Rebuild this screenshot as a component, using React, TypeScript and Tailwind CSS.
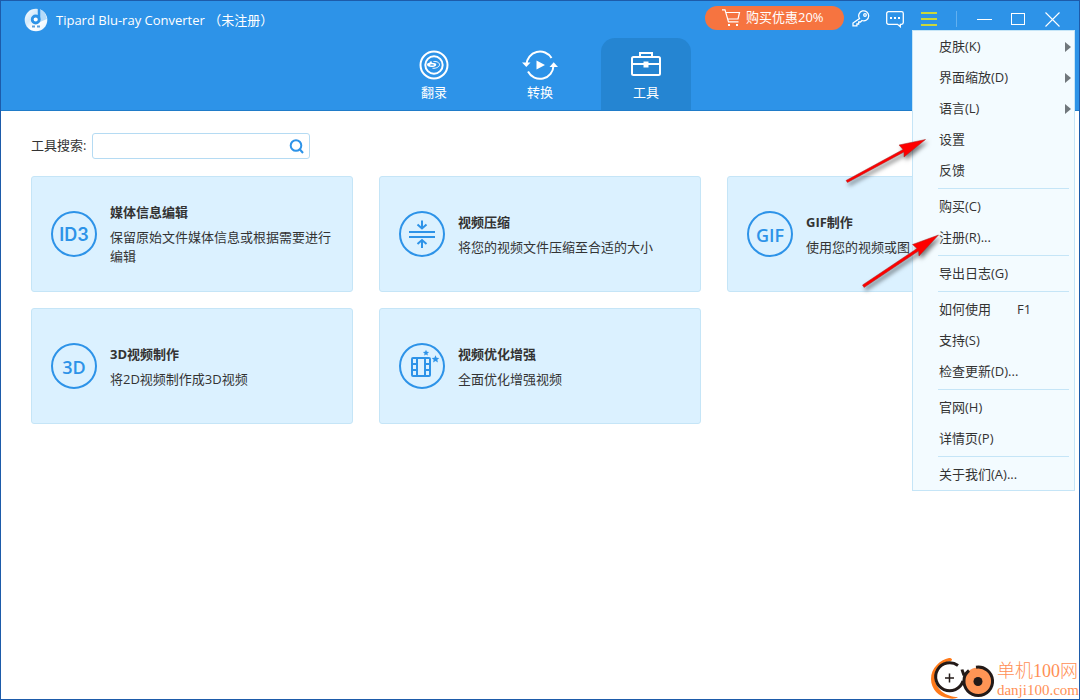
import type { ReactNode } from 'react';

const SANS = "font-['Open_Sans','Noto_Sans_CJK_SC',sans-serif]";

interface Tool {
  title: string;
  desc: string;
  icon: ReactNode;
}

interface MenuItem {
  label: string;
  shortcut?: string;
  submenu?: boolean;
}

// every inner array is a block, blocks are split by a separator
const menuGroups: MenuItem[][] = [
  [
    { label: '皮肤(K)', submenu: true },
    { label: '界面缩放(D)', submenu: true },
    { label: '语言(L)', submenu: true },
    { label: '设置' },
    { label: '反馈' },
  ],
  [{ label: '购买(C)' }, { label: '注册(R)...' }],
  [{ label: '导出日志(G)' }],
  [{ label: '如何使用', shortcut: 'F1' }, { label: '支持(S)' }, { label: '检查更新(D)...' }],
  [{ label: '官网(H)' }, { label: '详情页(P)' }],
  [{ label: '关于我们(A)...' }],
];

const CompressIcon = () => (
  <svg width="26" height="28" viewBox="0 0 26 28" fill="none" stroke="currentColor" strokeWidth="2">
    <path d="M0 12h26M0 17h26M13 .5v8M8.500 4.500l4.500 4 4.500-4M13 28v-8M8.500 24l4.500-4 4.500 4" />
  </svg>
);

const EnhanceIcon = () => (
  <svg width="46" height="46" viewBox="0 0 46 46" className="shrink-0" fill="none" stroke="currentColor" strokeWidth="2">
    <rect x="13" y="15" width="18" height="18" rx="1" />
    <path d="M18 15v18M26 15v18M13 21h5M13 27h5M26 21h5M26 27h5" />
    <path
      fill="currentColor"
      stroke="none"
      d="M27 6.800l.9 2 2.200.2-1.700 1.400.5 2.200-1.900-1.200-1.900 1.200.5-2.200L23.900 9l2.200-.2zM36.500 12.300l1.100 2.500 2.700.2-2 1.800.6 2.700-2.400-1.400-2.400 1.400.6-2.700-2-1.800 2.700-.2z"
    />
  </svg>
);

const tools: Tool[] = [
  {
    title: '媒体信息编辑',
    desc: '保留原始文件媒体信息或根据需要进行编辑',
    icon: <span className="font-['Inter',sans-serif] text-[18px] font-semibold">ID3</span>,
  },
  { title: '视频压缩', desc: '将您的视频文件压缩至合适的大小', icon: <CompressIcon /> },
  { title: 'GIF制作', desc: '使用您的视频或图', icon: <span className="pt-[2px] text-[18px] font-semibold">GIF</span> },
  { title: '3D视频制作', desc: '将2D视频制作成3D视频', icon: <span className="pt-[2px] text-[18px] font-semibold">3D</span> },
  { title: '视频优化增强', desc: '全面优化增强视频', icon: <EnhanceIcon /> },
];

function AppLogo() {
  return (
    <svg width="24" height="24" viewBox="0 0 24 24">
      <defs>
        <linearGradient id="disc" x1="0" y1="0" x2="1" y2="1">
          <stop offset="0" stopColor="#ffffff" />
          <stop offset="0.35" stopColor="#d3eafc" />
          <stop offset="0.6" stopColor="#ffffff" />
          <stop offset="1" stopColor="#e3f2fe" />
        </linearGradient>
      </defs>
      <circle cx="12" cy="12" r="11.300" fill="url(#disc)" />
      <path d="M16 1l5 4 2 6-7 3z" fill="#b4daf9" />
      <path d="M15 0v12" stroke="#2d93e8" strokeWidth="2.500" />
      <circle cx="11.700" cy="11.500" r="3.500" fill="#fff" stroke="#2d93e8" strokeWidth="2.800" />
      <path d="M8 18.500h3M13 18.500h3" stroke="#5a9edb" strokeWidth="2" />
    </svg>
  );
}

function RipIcon() {
  return (
    <svg width="30" height="30" viewBox="0 0 30 30" fill="none" stroke="currentColor" strokeWidth="2">
      <circle cx="15" cy="15" r="13.500" />
      <circle cx="15" cy="15" r="8.700" />
      <path strokeWidth="1" d="M14.500 11.500c3.500-.3 6 1.200 6 3.200s-3 3.800-7 3.600" />
      <path fill="currentColor" stroke="none" d="M8 14.500c0-1 1-1.600 2.500-1.800L11 11.500h2l-.3 1.300c3 0 4.600.7 4.600 1.900 0 1.400-2.300 2.300-5 2.300C9.500 17 8 16 8 14.500z" />
      <ellipse cx="13" cy="14.900" rx="2" ry=".7" fill="#2d93e8" stroke="none" />
    </svg>
  );
}

function ConvertIcon() {
  return (
    <svg width="36" height="30" viewBox="0 0 36 30" fill="none" stroke="currentColor" strokeWidth="2">
      <path d="M4.500 14.500A13.500 13.500 0 0 1 29.500 8M31.500 15.500A13.500 13.500 0 0 1 6 21.500" />
      <path fill="currentColor" stroke="none" d="M0 12.500h8.500L4.300 17zM27.500 17H36l-4.300-4.800zM14.500 10.500v9l8.500-4.500z" />
    </svg>
  );
}

function ToolboxIcon() {
  return (
    <svg width="30" height="30" viewBox="0 0 30 30" fill="none" stroke="currentColor" strokeWidth="2">
      <rect x="1" y="7" width="28" height="18" rx="1.500" />
      <path d="M9 7V3h12v4M1 14h28" />
      <path fill="currentColor" stroke="none" d="M12.500 11.500h5v6h-5z" />
    </svg>
  );
}

const tabs = [
  { label: '翻录', icon: <RipIcon />, active: false },
  { label: '转换', icon: <ConvertIcon />, active: false },
  { label: '工具', icon: <ToolboxIcon />, active: true },
];

function WindowButton({ label, children }: { label: string; children: ReactNode }) {
  return (
    <button aria-label={label} className="flex h-[26px] w-[34px] items-center justify-center">
      {children}
    </button>
  );
}

function TitleBar() {
  return (
    <div className="flex h-[37px] items-start justify-between pr-[10px] pl-[23px]">
      <div className="flex items-center gap-2 pt-[7px]">
        <AppLogo />
        <h1 className="leading-5">Tipard Blu-ray Converter （未注册）</h1>
      </div>
      <div className="flex items-start pt-[5px]">
        <button className="flex h-6 w-[139px] items-center gap-[5px] rounded-full bg-[#f67440] pl-4">
          <svg width="20" height="18" viewBox="0 0 20 18" fill="none" stroke="currentColor" strokeWidth="1.200">
            <path d="M1 .8h3l3.500 12h10M5 3.500h13.500L17 10H6.800" />
            <path fill="currentColor" stroke="none" d="M7 15h2v2H7zM15 15h2v2h-2z" />
          </svg>
          购买优惠20%
        </button>
        <WindowButton label="注册">
          <svg width="18" height="18" viewBox="0 0 18 18" fill="none" stroke="currentColor" strokeWidth="1.300">
            <path d="M7.500 8.500A5 5 0 1 1 10 10.500L8.500 12H6.700v2H4.900v1.800H1V13z" />
            <circle cx="13" cy="5" r="1.300" />
          </svg>
        </WindowButton>
        <WindowButton label="反馈">
          <svg width="18" height="18" viewBox="0 0 18 18" fill="none" stroke="currentColor" strokeWidth="1.300">
            <path d="M2.500 1.700h13a1.800 1.800 0 0 1 1.800 1.800v9a1.800 1.800 0 0 1-1.800 1.800h-1.200v2.400l-2.800-2.400h-9A1.800 1.800 0 0 1 .7 12.500v-9a1.800 1.800 0 0 1 1.800-1.800z" />
            <path fill="currentColor" stroke="none" d="M4 7h2v2H4zM8 7h2v2H8zM12 7h2v2h-2z" />
          </svg>
        </WindowButton>
        <WindowButton label="菜单">
          <svg width="16" height="14" viewBox="0 0 16 14" fill="none" stroke="#ffee00" strokeWidth="1.500">
            <path d="M0 1h16M0 7h16M0 13h16" />
          </svg>
        </WindowButton>
        <div className="flex h-[26px] w-[21px] items-center justify-center">
          <div className="h-4 w-px bg-[#62b0f0]" />
        </div>
        <WindowButton label="最小化">
          <span className="h-px w-[15px] bg-white" />
        </WindowButton>
        <WindowButton label="最大化">
          <span className="h-3 w-[14px] border border-white" />
        </WindowButton>
        <WindowButton label="关闭">
          <svg width="15" height="15" viewBox="0 0 15 15" stroke="currentColor" strokeWidth="1.100">
            <path d="M.5.5l14 14M14.500.5l-14 14" />
          </svg>
        </WindowButton>
      </div>
    </div>
  );
}

function ToolCard({ title, desc, icon }: Tool) {
  return (
    <button className="flex min-h-[116px] items-center gap-[13px] rounded-[3px] border border-[#c5e5f7] bg-[#dbf1ff] px-[19px] text-left">
      <span className="flex size-[46px] shrink-0 items-center justify-center rounded-full border-2 border-[#2d93e8] text-[#2d93e8]">
        {icon}
      </span>
      <span className="flex flex-col gap-[6px]">
        <span className="leading-5 font-bold">{title}</span>
        <span className="leading-[19px]">{desc}</span>
      </span>
    </button>
  );
}

function MainMenu() {
  return (
    <div className="absolute top-[29px] right-1 w-[163px] border border-[#c5e5f7] bg-[#f3fbff]">
      {menuGroups.map((group, i) => (
        <div key={group[0].label}>
          {i > 0 && (
            <div className="flex h-[5px] items-center pr-[5px] pl-[25px]">
              <div className="h-px flex-1 bg-[#c5e5f7]" />
            </div>
          )}
          {group.map(item => (
            <button key={item.label} className="flex h-[31px] w-full items-center pr-[3px] pl-[26px] text-left">
              {item.label}
              {item.shortcut && <span className="ml-[26px]">{item.shortcut}</span>}
              {item.submenu && (
                <svg width="6" height="10" viewBox="0 0 6 10" className="ml-auto text-[#70777c]">
                  <path d="M0 0l6 5-6 5z" fill="currentColor" />
                </svg>
              )}
            </button>
          ))}
        </div>
      ))}
    </div>
  );
}

// red pointers at 设置 and 注册
function Pointers() {
  return (
    <svg
      className="pointer-events-none absolute top-[129px] right-[129px] drop-shadow-[2px_3px_2px_rgba(0,0,0,0.5)]"
      width="110"
      height="170"
      viewBox="0 0 110 170"
      fill="#fe0000"
      stroke="#a02828"
      strokeWidth="0.500"
      strokeLinejoin="round"
    >
      <path d="M6 50.500L63 19.500 59 15 85.500 9.500 64 27 64 22 7.500 52.500z" />
      <path d="M22.500 155L77 118.500 72.500 114.500 98.500 105 79 126 78.500 121 24 157.500z" />
    </svg>
  );
}

function SiteMark() {
  return (
    <div className="absolute right-0 bottom-0 flex items-center text-[#ff8f55]">
      <svg width="66" height="42" viewBox="0 0 66 42" fill="none">
        <path d="M18 1C9 3 0 11 0 22c0 10 8 18 17 19 3 1 8 1 10-1-12 0-23-8-23-19C4 12 10 5 20 4c2-1 1-3-2-3z" fill="#ff7a1a" />
        <path d="M27 8.500A14 14 0 1 0 32 24" stroke="#231a18" strokeWidth="3" />
        <path d="M14 21h9M18.500 16.500v9" stroke="#231a18" strokeWidth="1.500" />
        <circle cx="47" cy="24.500" r="14" fill="#ff9555" />
        <path d="M31 12.500c.5 2 1.500 4 2 6M45 10.200a14.300 14.300 0 1 1-12 13C33 19 35 16 38 13.500" stroke="#231a18" strokeWidth="3" />
        <circle cx="47" cy="24.500" r="4.500" fill="#231a18" />
      </svg>
      <div className="flex flex-col pt-1 font-['Liberation_Serif','Noto_Sans_CJK_SC',serif]">
        <span className="text-[18px] leading-5 font-light">单机100网</span>
        <a href="#" className="text-[15px] leading-[18px]">danji100.com</a>
      </div>
    </div>
  );
}

export default function App() {
  return (
    <div className={`relative min-h-screen overflow-hidden border border-[#1d5baa] bg-white text-[13px] text-[#333] ${SANS}`}>
      <header className="border-b border-[#207cc9] bg-[#2d93e8] text-white">
        <TitleBar />
        <nav className="flex justify-center gap-4">
          {tabs.map(({ label, icon, active }) => (
            <button
              key={label}
              className={`flex h-[72px] w-[90px] flex-col items-center gap-[2px] rounded-t-[14px] pt-3 ${active ? 'bg-[#2585d2]' : ''}`}
            >
              {icon}
              <span className="leading-5">{label}</span>
            </button>
          ))}
        </nav>
      </header>

      <main className="px-[30px] pt-[22px]">
        <div className="flex items-center gap-[6px]">
          <label htmlFor="tool-search">工具搜索:</label>
          <div className="flex h-[26px] w-[218px] items-center rounded-[3px] border border-[#b5dbf3] pr-[5px]">
            <input id="tool-search" type="text" className="h-full min-w-0 flex-1 px-2 outline-none" />
            <button aria-label="搜索" className="text-[#2d93e8]">
              <svg width="15" height="15" viewBox="0 0 15 15" fill="none" stroke="currentColor" strokeWidth="2">
                <circle cx="7" cy="6.500" r="5.300" />
                <path d="M10.500 10l3.500 4" />
              </svg>
            </button>
          </div>
        </div>

        <div className="mt-[17px] grid grid-cols-3 gap-x-[26px] gap-y-4">
          {tools.map(tool => (
            <ToolCard key={tool.title} {...tool} />
          ))}
        </div>
      </main>

      <MainMenu />
      <Pointers />
      <SiteMark />
    </div>
  );
}
